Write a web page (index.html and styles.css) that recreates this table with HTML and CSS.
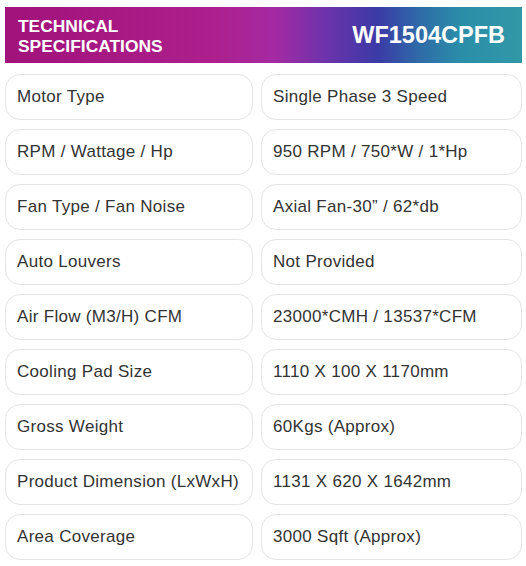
FILE: index.html
```html
<!DOCTYPE html>
<html>
<head>
<meta charset="utf-8">
<link rel="stylesheet" href="styles.css">
</head>
<body>
<div class="spec">
  <div class="head">
    <div class="title">TECHNICAL<br>SPECIFICATIONS</div>
    <div class="model">WF1504CPFB</div>
  </div>
  <div class="grid">
    <div class="cell">Motor Type</div><div class="cell">Single Phase 3 Speed</div>
    <div class="cell">RPM / Wattage / Hp</div><div class="cell">950 RPM / 750*W / 1*Hp</div>
    <div class="cell">Fan Type / Fan Noise</div><div class="cell">Axial Fan-30” / 62*db</div>
    <div class="cell">Auto Louvers</div><div class="cell">Not Provided</div>
    <div class="cell">Air Flow (M3/H) CFM</div><div class="cell">23000*CMH / 13537*CFM</div>
    <div class="cell">Cooling Pad Size</div><div class="cell">1110 X 100 X 1170mm</div>
    <div class="cell">Gross Weight</div><div class="cell">60Kgs (Approx)</div>
    <div class="cell">Product Dimension (LxWxH)</div><div class="cell">1131 X 620 X 1642mm</div>
    <div class="cell">Area Coverage</div><div class="cell">3000 Sqft (Approx)</div>
  </div>
</div>
</body>
</html>
```
FILE: styles.css
```css
html, body { margin: 0; padding: 0; background: #fff; }
body { font-family: "Liberation Sans", Arial, sans-serif; }
.spec { padding: 7px 4px 0 5px; width: 517px; }
.head {
  height: 56px;
  display: flex;
  align-items: center;
  justify-content: space-between;
  padding: 0 17px 0 13px;
  color: #fff;
  font-weight: bold;
  background: linear-gradient(90deg, #a1127a 0%, #ad1f8c 40%, #a52aa3 52%, #6d33ab 62%, #3b3aa6 72%, #2f6aa8 80%, #2b8ea9 88%, #3198a7 100%);
}
.title { font-size: 17.4px; line-height: 20px; padding-top: 1px; }
.model { font-size: 23.5px; padding-top: 1px; }
.grid {
  margin-top: 11px;
  display: grid;
  grid-template-columns: 248px 261px;
  column-gap: 8px;
  row-gap: 9px;
}
.cell {
  height: 46px;
  box-sizing: border-box;
  border: 1px solid #e4e4e4;
  border-radius: 15px;
  display: flex;
  align-items: center;
  padding: 0 11px;
  font-size: 17px;
  letter-spacing: 0.3px;
  color: #333;
  white-space: nowrap;
}
```
